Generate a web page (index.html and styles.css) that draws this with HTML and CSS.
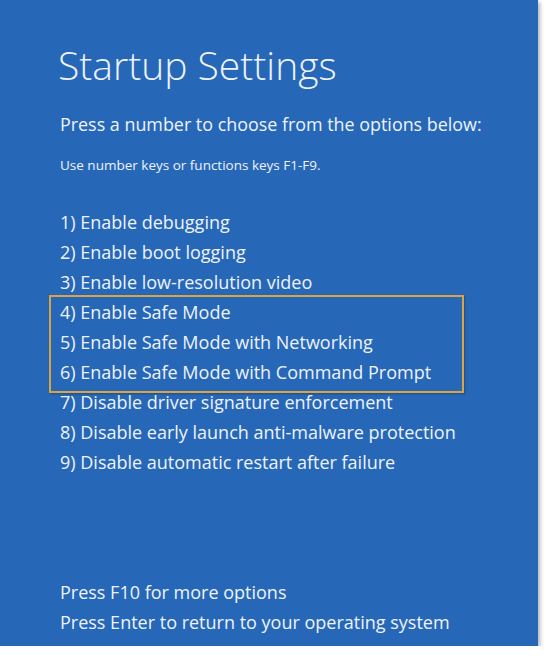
FILE: index.html
```html
<!DOCTYPE html>
<html lang="en">
<head>
    <meta charset="UTF-8">
    <meta name="viewport" content="width=device-width, initial-scale=1.0">
    <title>Startup Settings</title>
    <link rel="stylesheet" href="styles.css">
</head>
<body>
    <div class="screen">
        <h1>Startup Settings</h1>
        <p class="lead">Press a number to choose from the options below:</p>
        <p class="hint">Use number keys or functions keys F1-F9.</p>

        <div class="options">
            <div class="option">1) Enable debugging</div>
            <div class="option">2) Enable boot logging</div>
            <div class="option">3) Enable low-resolution video</div>
            <!-- safe mode entries are boxed -->
            <div class="highlight">
                <div class="option">4) Enable Safe Mode</div>
                <div class="option">5) Enable Safe Mode with Networking</div>
                <div class="option">6) Enable Safe Mode with Command Prompt</div>
            </div>
            <div class="option">7) Disable driver signature enforcement</div>
            <div class="option">8) Disable early launch anti-malware protection</div>
            <div class="option">9) Disable automatic restart after failure</div>
        </div>

        <div class="footer">
            <div class="option">Press F10 for more options</div>
            <div class="option">Press Enter to return to your operating system</div>
        </div>
    </div>
</body>
</html>
```

FILE: styles.css
```css
body {
    margin: 0;
    padding: 0;
    background-color: #fff;
    font-family: "Open Sans", "Noto Sans", sans-serif;
}
.screen {
    width: 538px;
    height: 646px;
    box-sizing: border-box;
    padding: 40px 0 9px 58px;
    display: flex;
    flex-direction: column;
    background-color: #2767b8;
    color: #eef3fb;
    box-shadow: 2px 2px 4px rgba(0,0,0,0.3);
}
h1 {
    margin: 0;
    font-size: 39px;
    font-weight: 300;
    line-height: 50px;
}
.lead {
    margin: 19px 0 0 2px;
    font-size: 17.9px;
    line-height: 30px;
}
.hint {
    margin: 16px 0 0 2px;
    font-size: 13.5px;
    line-height: 20px;
}
.options {
    margin-top: 32px;
}
.option {
    margin-left: 2px;
    font-size: 18px;
    line-height: 30px;
    white-space: nowrap;
}
.highlight {
    width: 415px;
    box-sizing: border-box;
    margin: -2px 0 -6px -9px;
    padding: 0 0 4px 7px;
    border: 2px solid #d9a441;
    box-shadow: 1px 1px 2px rgba(0,0,0,0.25);
}
.footer {
    margin-top: auto;
}
```
